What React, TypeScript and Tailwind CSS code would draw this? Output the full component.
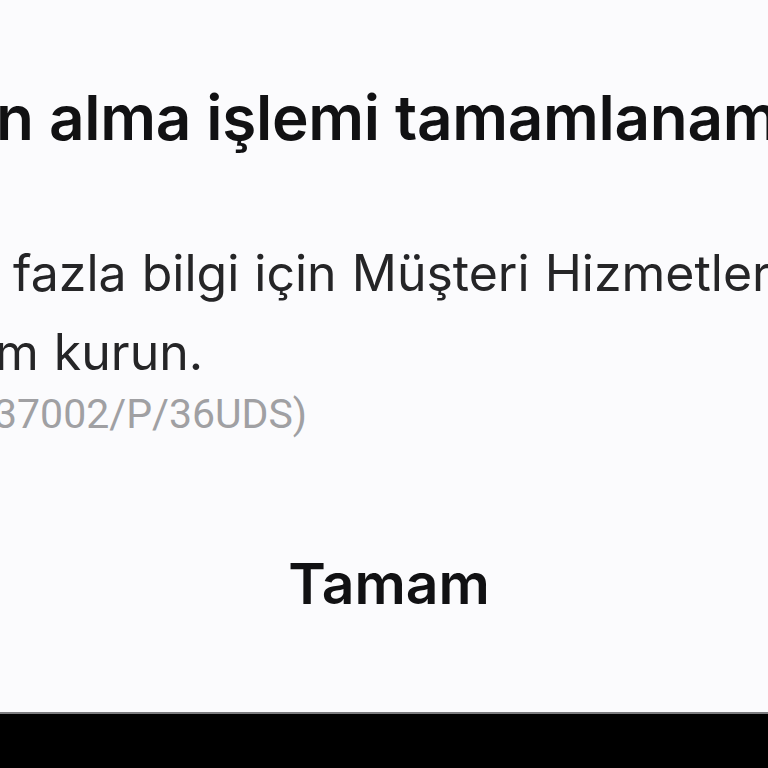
export default function App() {
  return (
    <div className="h-[768px] w-[768px] overflow-hidden bg-black flex flex-col">
      {/* Dialog surface (cropped) */}
      <div className="h-[714px] shrink-0 bg-[#fbfbfd] border-b-2 border-[#7d7d80] flex flex-col overflow-hidden font-['Inter',sans-serif]">
        <div className="pt-[87px] ml-[-4px] whitespace-nowrap text-[62px] leading-none font-semibold text-[#111113] tracking-[-0.3px]">
          n alma işlemi tamamlanamadı
        </div>

        <div className="mt-[85px] text-[50px] leading-[79px] text-[#252527] whitespace-nowrap [word-spacing:1px]">
          <div className="ml-[13px]">fazla bilgi için Müşteri Hizmetleri ile</div>
          <div className="ml-[-5px]">m kurun.</div>
        </div>

        <div className="mt-[2px] ml-[-6px] whitespace-nowrap text-[41px] leading-none text-[#a0a0a3] font-['Roboto',sans-serif]">
          37002/P/36UDS)
        </div>

        <div className="mt-[120px] flex justify-center pl-[10px]">
          <span className="text-[57px] leading-none font-semibold text-[#111113]">Tamam</span>
        </div>
      </div>
    </div>
  );
}
